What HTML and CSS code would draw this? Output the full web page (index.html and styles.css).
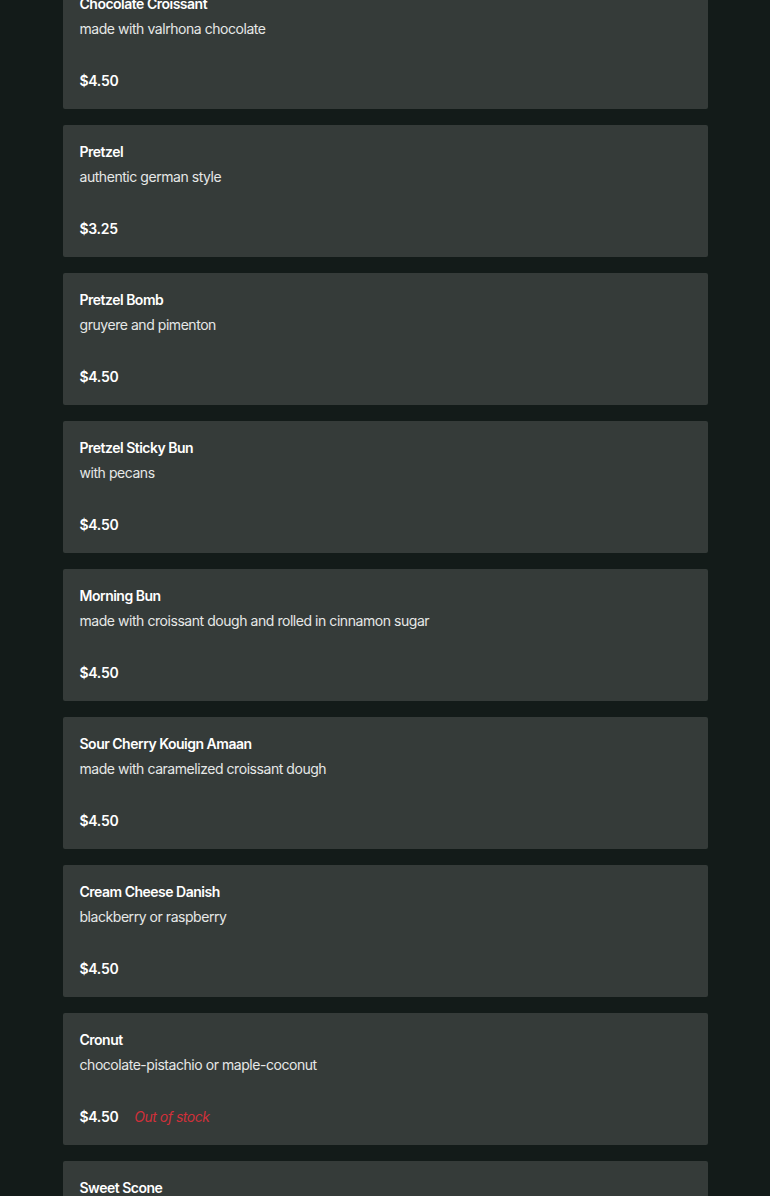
FILE: index.html
```html
<!DOCTYPE html>
<html>
<head>
<meta charset="utf-8">
<link rel="stylesheet" href="styles.css">
</head>
<body>
<div class="menu">
  <div class="card"><div class="title">Chocolate Croissant</div><div class="desc">made with valrhona chocolate</div><div class="bottom"><span class="price">$4.50</span></div></div>
  <div class="card"><div class="title">Pretzel</div><div class="desc">authentic german style</div><div class="bottom"><span class="price">$3.25</span></div></div>
  <div class="card"><div class="title">Pretzel Bomb</div><div class="desc">gruyere and pimenton</div><div class="bottom"><span class="price">$4.50</span></div></div>
  <div class="card"><div class="title">Pretzel Sticky Bun</div><div class="desc">with pecans</div><div class="bottom"><span class="price">$4.50</span></div></div>
  <div class="card"><div class="title">Morning Bun</div><div class="desc">made with croissant dough and rolled in cinnamon sugar</div><div class="bottom"><span class="price">$4.50</span></div></div>
  <div class="card"><div class="title">Sour Cherry Kouign Amaan</div><div class="desc">made with caramelized croissant dough</div><div class="bottom"><span class="price">$4.50</span></div></div>
  <div class="card"><div class="title">Cream Cheese Danish</div><div class="desc">blackberry or raspberry</div><div class="bottom"><span class="price">$4.50</span></div></div>
  <div class="card"><div class="title">Cronut</div><div class="desc">chocolate-pistachio or maple-coconut</div><div class="bottom"><span class="price">$4.50</span><span class="oos">Out of stock</span></div></div>
  <div class="card"><div class="title">Sweet Scone</div><div class="desc">seasonal fruit</div><div class="bottom"><span class="price">$4.50</span></div></div>
</div>
</body>
</html>
```
FILE: styles.css
```css
html, body {
  margin: 0;
  padding: 0;
  background: #131b19;
  font-family: Inter, "Noto Sans", sans-serif;
  height: 1196px;
  overflow: hidden;
}
.menu {
  width: 645px;
  margin: -23px auto 0;
  display: flex;
  flex-direction: column;
  gap: 16px;
}
.card {
  background: #353b39;
  border-radius: 2px;
  padding: 17px 17px 18px;
  display: flex;
  flex-direction: column;
}
.title {
  color: #ffffff;
  font-weight: 600;
  font-size: 14px;
  line-height: 20px;
  letter-spacing: -0.5px;
}
.desc {
  color: #e6e8e7;
  font-size: 14px;
  line-height: 20px;
  margin-top: 5px;
  letter-spacing: -0.45px;
}
.bottom {
  margin-top: 32px;
  display: flex;
  align-items: center;
  gap: 16px;
  line-height: 20px;
}
.price {
  color: #ffffff;
  font-weight: 600;
  font-size: 14px;
  letter-spacing: -0.3px;
}
.oos {
  color: #d0303a;
  font-style: italic;
  font-size: 14px;
  letter-spacing: -0.5px;
}
```
